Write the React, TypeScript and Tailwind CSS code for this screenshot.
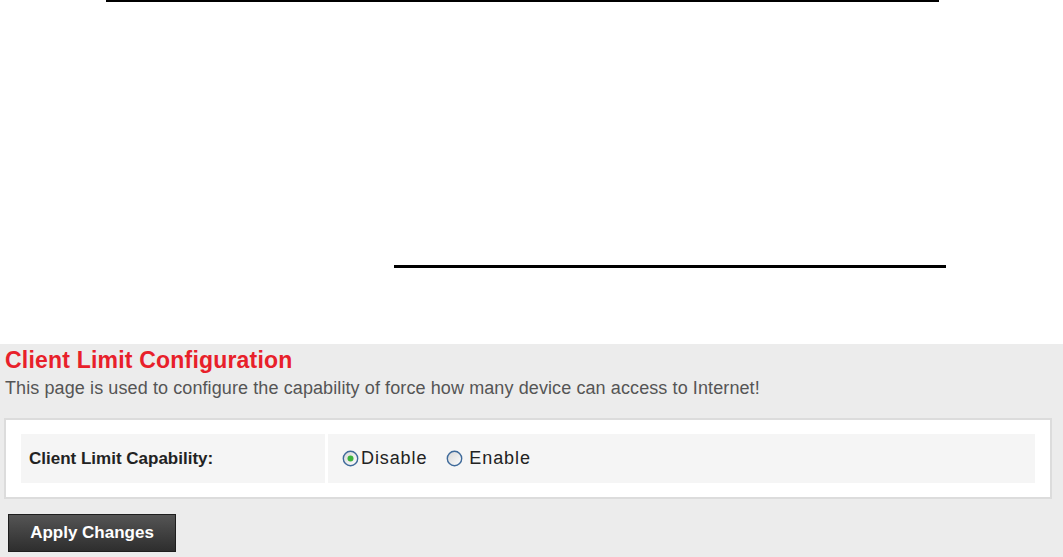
import React from "react";

function Radio({ checked }: { checked: boolean }) {
  return (
    <svg width="17" height="17" viewBox="0 0 17 17" className="shrink-0">
      <defs>
        <linearGradient id={checked ? "rg1" : "rg2"} x1="0" y1="0" x2="1" y2="1">
          <stop offset="0" stopColor="#d6d6d6" />
          <stop offset="1" stopColor="#ffffff" />
        </linearGradient>
      </defs>
      <circle cx="8.5" cy="8.5" r="7.2" fill={`url(#${checked ? "rg1" : "rg2"})`} stroke="#3f6a9a" strokeWidth="1.4" />
      {checked && <circle cx="8.5" cy="8.5" r="3" fill="#3cb43c" />}
    </svg>
  );
}

export default function App() {
  return (
    <div className="w-[1063px] h-[557px] bg-white overflow-hidden flex flex-col" style={{ fontFamily: '"Liberation Sans", Arial, sans-serif' }}>
      <div className="h-[344px] flex flex-col">
        <div className="ml-[106px] w-[833px] h-[2px] bg-black" />
        <div className="ml-[394px] mt-[263px] w-[552px] h-[3px] bg-black" />
      </div>
      <div className="flex-1 bg-[#ececec] px-[4px] pt-[4px]">
        <h1 className="text-[#e8202a] text-[23px] leading-[24px] font-bold pl-[1px] tracking-[0.2px]">Client Limit Configuration</h1>
        <p className="text-[#555555] text-[18px] leading-[22px] pl-[1px] mt-[5px] tracking-[0.1px]">This page is used to configure the capability of force how many device can access to Internet!</p>
        <div className="mt-[19px] w-[1048px] h-[81px] bg-white border-2 border-[#dcdcdc] px-[15px] py-[14px]">
          <div className="flex h-[49px] gap-[3px]">
            <div className="w-[304px] bg-[#f5f5f5] flex items-center pl-[8px] text-[17px] font-bold text-[#222]">Client Limit Capability:</div>
            <div className="flex-1 bg-[#f5f5f5] flex items-center pl-[14px] text-[18px] tracking-[0.9px] text-[#222]">
              <Radio checked />
              <span className="ml-[2px]">Disable</span>
              <span className="ml-[19px]"><Radio checked={false} /></span>
              <span className="ml-[6px]">Enable</span>
            </div>
          </div>
        </div>
        <button className="mt-[15px] ml-[4px] w-[168px] h-[38px] border border-[#1e1e1e] bg-gradient-to-b from-[#555] to-[#2e2e2e] text-white font-bold text-[17px] tracking-[0px] flex items-center justify-center">Apply Changes</button>
      </div>
    </div>
  );
}
